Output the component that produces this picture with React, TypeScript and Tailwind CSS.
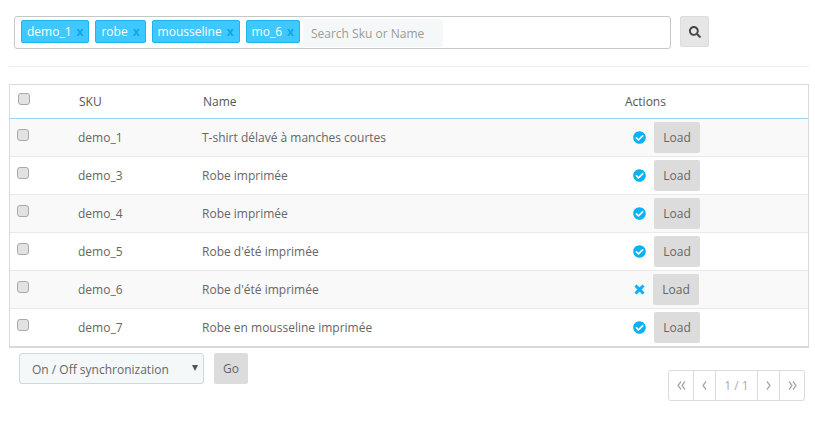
import { FaCheckCircle, FaSearch } from "react-icons/fa";

const tags = ["demo_1", "robe", "mousseline", "mo_6"];

const rows = [
  { sku: "demo_1", name: "T-shirt délavé à manches courtes", on: true },
  { sku: "demo_3", name: "Robe imprimée", on: true },
  { sku: "demo_4", name: "Robe imprimée", on: true },
  { sku: "demo_5", name: "Robe d'été imprimée", on: true },
  { sku: "demo_6", name: "Robe d'été imprimée", on: false },
  { sku: "demo_7", name: "Robe en mousseline imprimée", on: true },
];

function Checkbox() {
  return <input type="checkbox" className="block appearance-none w-[12px] h-[12px] rounded-[3px] border border-[#a9a9a9] bg-[#e2e2e2]" />;
}

function Chevron({ d }: { d: string }) {
  return (
    <svg width="11" height="11" viewBox="0 0 11 11" fill="none" stroke="#aaaaaa" strokeWidth="1.3">
      <path d={d} />
    </svg>
  );
}

export default function App() {
  return (
    <div className="w-[815px] h-[426px] overflow-hidden bg-white text-[12px] text-[#666] font-['Open_Sans',sans-serif]">
      <div className="flex items-start gap-[9px] pl-[14px] pt-[16px]">
        <div className="flex items-start gap-[6px] w-[657px] h-[33px] pl-[6px] pt-[2px] border border-[#c7c7c7] rounded-[3px]">
          {tags.map((t) => (
            <span key={t} className="flex items-center h-[23px] mt-[1px] px-[5px] gap-[5px] bg-[#3ec8ff] border border-[#1bb5f0] rounded-[2px] text-white">
              {t}
              <span className="font-bold text-[#0da9e6]">x</span>
            </span>
          ))}
          <div className="flex items-center w-[140px] h-[28px] -ml-[3px] pl-[8px] pt-[1px] rounded-[3px] bg-[#f5f8f9] text-[#9a9a9a]">
            Search Sku or Name
          </div>
        </div>
        <button className="flex items-center justify-center w-[29px] h-[31px] bg-[#e6e6e6] border border-[#dcdcdc] rounded-[2px] text-[#444]">
          <FaSearch size={12} />
        </button>
      </div>

      <div className="ml-[9px] mt-[17px] w-[800px] h-[1px] bg-[#eeeeee]" />

      <div className="ml-[9px] mt-[17px] w-[800px] border border-[#d9d9d9] border-b-2">
        <div className="flex items-center h-[34px] border-b border-[#96d4f0] text-[#555]">
          <div className="w-[69px] pl-[8px] -mt-[6px]"><Checkbox /></div>
          <div className="w-[124px]">SKU</div>
          <div className="w-[422px]">Name</div>
          <div>Actions</div>
        </div>
        {rows.map((r, i) => (
          <div key={r.sku} className={`flex items-center ${i < rows.length - 1 ? "h-[38px] border-b border-[#e9e9e9]" : "h-[37px]"} ${i % 2 === 0 ? "bg-[#f9f9f9]" : "bg-white"}`}>
            <div className="w-[68px] pl-[7px] -mt-[5px]"><Checkbox /></div>
            <div className="w-[124px]">{r.sku}</div>
            <div className="w-[430px]">{r.name}</div>
            <div className="flex items-center w-[70px]">
              <span className={`flex justify-center w-[15px] text-[#08b2f5] ${r.on ? "mr-[7px]" : "mr-[6px]"}`}>
                {r.on ? (
                  <FaCheckCircle size={13} />
                ) : (
                  <svg width="11" height="11" viewBox="0 0 11 11" fill="none" stroke="#08b2f5" strokeWidth="3">
                    <path d="M1.5 1.5l8 8M9.5 1.5l-8 8" />
                  </svg>
                )}
              </span>
              <button className="w-[46px] h-[31px] bg-[#dcdcdc] rounded-[2px] text-[#666]">Load</button>
            </div>
          </div>
        ))}
      </div>

      <div className="flex items-start justify-between pl-[19px] pr-[10px] mt-[5px]">
        <div className="flex items-center gap-[10px]">
          <div className="relative">
            <select className="block appearance-none w-[185px] h-[31px] pl-[12px] pt-[2px] rounded-[3px] border border-[#cfd8dc] bg-[#f5f8f9] text-[#666]">
              <option>On / Off synchronization</option>
            </select>
            <span className="absolute right-[6px] top-[12px] w-0 h-0 border-x-[3px] border-x-transparent border-t-[6px] border-t-[#555]" />
          </div>
          <button className="w-[34px] h-[31px] bg-[#dcdcdc] rounded-[2px] text-[#666]">Go</button>
        </div>
        <div className="flex items-center h-[31px] mt-[17px] border border-[#dcdcdc] rounded-[3px] text-[#aaa]">
          <span className="flex items-center justify-center w-[24px] h-full"><Chevron d="M5 1.5L2 5.5l3 4M9 1.5L6 5.5l3 4" /></span>
          <span className="flex items-center justify-center w-[22px] h-full border-l border-[#dcdcdc]"><Chevron d="M7 1.5L4 5.5l3 4" /></span>
          <span className="flex items-center justify-center w-[42px] h-full border-l border-[#dcdcdc]">1 / 1</span>
          <span className="flex items-center justify-center w-[22px] h-full border-l border-[#dcdcdc]"><Chevron d="M4 1.5l3 4-3 4" /></span>
          <span className="flex items-center justify-center w-[25px] h-full border-l border-[#dcdcdc]"><Chevron d="M2 1.5l3 4-3 4M6 1.5l3 4-3 4" /></span>
        </div>
      </div>
    </div>
  );
}
